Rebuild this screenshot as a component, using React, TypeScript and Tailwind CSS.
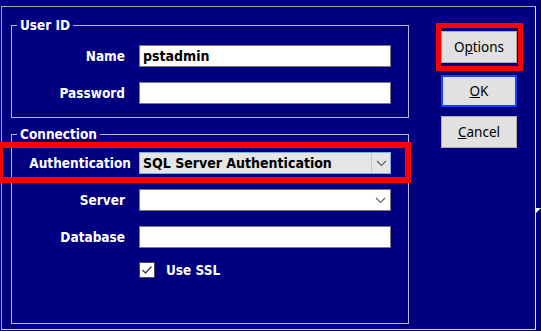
import React from "react";

const font = "[font-family:'DejaVu_Sans_Condensed','DejaVu_Sans',sans-serif]";
const labelCls = `shrink-0 text-right text-white font-bold text-[13.5px] leading-[16px] whitespace-nowrap ${font}`;
const legendCls = `ml-[5px] px-[3px] text-white font-bold text-[13.5px] leading-[16px] ${font}`;
const btnCls =
  "w-[76px] h-[32px] bg-[#e1e1e1] text-black text-[13.5px] [font-family:'Noto_Sans',sans-serif] flex items-center justify-center";

function Chevron() {
  return (
    <svg width="11" height="7" viewBox="0 0 11 7" className="block">
      <polyline points="1,1 5.5,5.5 10,1" fill="none" stroke="#606060" strokeWidth="1.1" />
    </svg>
  );
}

function Row({ label, wide, children }: { label: string; wide?: boolean; children: React.ReactNode }) {
  return (
    <div className="flex items-center">
      <span className={labelCls + (wide ? " w-[119px]" : " w-[113px]")}>{label}</span>
      <div className={wide ? "ml-[8px]" : "ml-[14px]"}>{children}</div>
    </div>
  );
}

function TextBox({ value }: { value?: string }) {
  return (
    <div className={`w-[252px] h-[22px] bg-white border border-[#7a7a7a] flex items-center pl-[3px] text-black font-bold text-[14px] ${font}`}>
      {value}
    </div>
  );
}

function Combo({ value, focused }: { value?: string; focused?: boolean }) {
  return (
    <div
      className={
        focused
          ? "w-[252px] h-[22px] bg-[#e5e5e5] border border-[#7ab0e8] flex items-stretch"
          : "w-[252px] h-[22px] bg-white border border-[#7a7a7a] flex items-stretch"
      }
    >
      <div className={`flex-1 flex items-center pl-[3px] text-black font-bold text-[14px] whitespace-nowrap ${font}`}>
        {value}
      </div>
      <div
        className={
          focused
            ? "w-[19px] border-l border-[#c8c8c8] flex items-center justify-center"
            : "w-[19px] flex items-center justify-center"
        }
      >
        <Chevron />
      </div>
    </div>
  );
}

export default function App() {
  return (
    <div className="relative w-[541px] h-[331px] overflow-hidden bg-[#000080]">
      <div className="ml-[1px] mt-[6px] w-[535px] h-[324px] border border-t-[#a8a8a8] border-l-[#a8a8a8] border-r-[#e8e8e8] border-b-[#d8d8d8] flex">
        {/* left groups */}
        <div className="ml-[9px] mt-[10px] flex flex-col">
          <fieldset className="w-[398px] border border-[#b8b8d8] pt-[12px] pb-[13px] flex flex-col gap-[15px]">
            <legend className={legendCls}>User ID</legend>
            <Row label="Name">
              <TextBox value="pstadmin" />
            </Row>
            <Row label="Password">
              <TextBox />
            </Row>
          </fieldset>

          <fieldset className="mt-[8px] w-[398px] border border-[#b8b8d8] pt-[10px] pb-[45px] flex flex-col">
            <legend className={legendCls}>Connection</legend>
            <Row label="Authentication" wide>
              <Combo value="SQL Server Authentication" focused />
            </Row>
            <div className="mt-[15px]">
              <Row label="Server">
                <Combo />
              </Row>
            </div>
            <div className="mt-[15px]">
              <Row label="Database">
                <TextBox />
              </Row>
            </div>
            <div className="mt-[14px] ml-[127px] flex items-center">
              <div className="w-[16px] h-[16px] bg-white border border-[#4d4d4d] flex items-center justify-center">
                <svg width="12" height="10" viewBox="0 0 12 10">
                  <polyline points="1.5,5 4.5,8 10.5,1.5" fill="none" stroke="#404040" strokeWidth="1.4" />
                </svg>
              </div>
              <span className={`ml-[11px] text-white font-bold text-[13.5px] leading-[16px] ${font}`}>
                Use SSL
              </span>
            </div>
          </fieldset>
        </div>

        {/* buttons */}
        <div className="ml-[32px] mt-[24px] flex flex-col">
          <button className={btnCls + " border border-[#adadad]"}>
            O<span className="underline">p</span>tions
          </button>
          <button className={btnCls + " mt-[12px] border-2 border-[#1a3cff]"}>
            <span className="underline">O</span>K
          </button>
          <button className={btnCls + " mt-[9px] border border-[#adadad]"}>
            <span className="underline">C</span>ancel
          </button>
        </div>
      </div>

      {/* red highlight marks */}
      <div className="absolute left-[-3px] top-[142px] w-[414px] h-[41px] border-[6px] border-[#ff0000]" />
      <div className="absolute left-[436px] top-[23px] w-[87px] h-[48px] border-[5px] border-[#ff0000]" />

      {/* stray corner at right edge */}
      <svg className="absolute left-[536px] top-[208px]" width="5" height="5" viewBox="0 0 5 5">
        <polygon points="0,0 5,0 0,5" fill="#ffffff" />
      </svg>
    </div>
  );
}
